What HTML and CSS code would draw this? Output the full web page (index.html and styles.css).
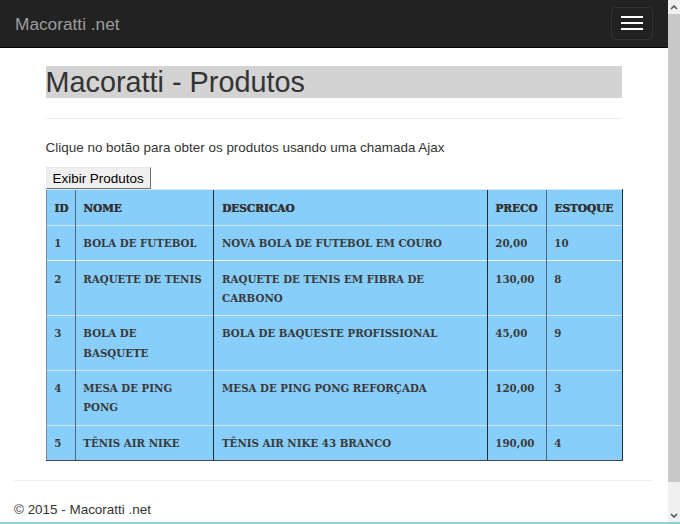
FILE: index.html
```html
<!DOCTYPE html>
<html>
<head>
<meta charset="utf-8">
<title>Macoratti - Produtos</title>
<link rel="stylesheet" href="styles.css">
</head>
<body>
<div class="frame">
    <div class="page">
        <nav class="navbar">
            <a class="brand" href="#">Macoratti .net</a>
            <button class="toggle"><span></span><span></span><span></span></button>
        </nav>
        <div class="content">
            <h1>Macoratti - Produtos</h1>
            <hr class="rule">
            <p>Clique no botão para obter os produtos usando uma chamada Ajax</p>
            <button class="show-btn">Exibir Produtos</button>
            <table class="products">
                <colgroup>
                    <col class="c-id"><col class="c-nome"><col class="c-desc"><col class="c-preco"><col class="c-estoque">
                </colgroup>
                <thead>
                    <tr><th>ID</th><th>NOME</th><th>DESCRICAO</th><th>PRECO</th><th>ESTOQUE</th></tr>
                </thead>
                <tbody>
                    <tr><td>1</td><td>BOLA DE FUTEBOL</td><td>NOVA BOLA DE FUTEBOL EM COURO</td><td>20,00</td><td>10</td></tr>
                    <tr><td>2</td><td>RAQUETE DE TENIS</td><td>RAQUETE DE TENIS EM FIBRA DE CARBONO</td><td>130,00</td><td>8</td></tr>
                    <tr><td>3</td><td>BOLA DE BASQUETE</td><td>BOLA DE BAQUESTE PROFISSIONAL</td><td>45,00</td><td>9</td></tr>
                    <tr><td>4</td><td>MESA DE PING PONG</td><td>MESA DE PING PONG REFORÇADA</td><td>120,00</td><td>3</td></tr>
                    <tr><td>5</td><td>TÊNIS AIR NIKE</td><td>TÊNIS AIR NIKE 43 BRANCO</td><td>190,00</td><td>4</td></tr>
                </tbody>
            </table>
        </div>
        <footer class="footer">
            <hr class="rule">
            <p>© 2015 - Macoratti .net</p>
        </footer>
    </div>
    <div class="scrollbar">
        <div class="arrow">
            <svg width="8" height="5" viewBox="0 0 8 5"><path d="M1 4 L4 1 L7 4" fill="none" stroke="#505050" stroke-width="1.5"/></svg>
        </div>
        <div class="thumb"></div>
        <div class="arrow arrow-down">
            <svg width="8" height="5" viewBox="0 0 8 5"><path d="M1 1 L4 4 L7 1" fill="none" stroke="#505050" stroke-width="1.5"/></svg>
        </div>
    </div>
</div>
<div class="strip"></div>
</body>
</html>
```

FILE: styles.css
```css
html, body {
    margin: 0;
    height: 524px;
    overflow: hidden;
}
body {
    display: flex;
    flex-direction: column;
    color: #333;
    background: #fff;
    font: 13.44px "Liberation Sans", Arial, sans-serif;
    line-height: 19.2px;
}
.frame {
    display: flex;
    flex: 1;
    min-height: 0;
}
.page {
    flex: 1;
    min-width: 0;
    overflow: hidden;
}
.strip {
    height: 2px;
    background: #8fd0d8;
}

/* navbar */
.navbar {
    display: flex;
    justify-content: space-between;
    align-items: flex-start;
    height: 47px;
    padding: 0 15px 0 15px;
    background: #222;
    border-bottom: 1px solid #080808;
}
.brand {
    color: #9d9d9d;
    font-size: 17.28px;
    line-height: 48px;
    text-decoration: none;
}
.toggle {
    display: flex;
    flex-direction: column;
    gap: 4px;
    width: 42px;
    height: 33px;
    margin-top: 7px;
    padding: 8px 9px;
    background: transparent;
    border: 1px solid #333;
    border-radius: 4px;
}
.toggle span {
    display: block;
    width: 22px;
    height: 2px;
    background: #fff;
}

/* main */
.content {
    padding: 18px 46px 0 45.6px;
}
h1 {
    margin: 0;
    height: 32px;
    background: #d3d3d3;
    font-size: 28.8px;
    font-weight: 500;
    line-height: 32px;
}
.rule {
    height: 0;
    margin: 0;
    border: 0;
    border-top: 1px solid #eee;
}
.content .rule {
    margin-top: 20px;
}
.content p {
    margin: 19px 0 0 0;
}
.show-btn {
    display: block;
    width: 105px;
    height: 22px;
    margin-top: 10px;
    padding: 0;
    color: #000;
    background: #efefef;
    border: 1px solid;
    border-color: #e8e8e8 #707070 #707070 #e8e8e8;
    font: 13.44px "Liberation Sans", Arial, sans-serif;
}

/* table */
.products {
    width: 576px;
    table-layout: fixed;
    border-collapse: collapse;
    background: #87cefa;
    font-family: "DejaVu Serif", serif;
    font-stretch: condensed;
    font-size: 11.4px;
    line-height: 19.2px;
}
.c-id { width: 29px; }
.c-nome { width: 138px; }
.c-desc { width: 274px; }
.c-preco { width: 59px; }
.c-estoque { width: 76px; }
.products th, .products td {
    padding: 8.4px 7.68px 6.96px 7.68px;
    vertical-align: top;
    text-align: left;
    border-top: 1px solid #d6e7f2;
    border-left: 1px solid #3a4a55;
    font-weight: bold;
    color: #3a3a3a;
}
.products th {
    font-size: 11.7px;
    color: #333;
    text-shadow: 0.4px 0 0 #333;
}
.products th:nth-child(1), .products td:nth-child(1) {
    border-left-color: #7d8a94;
}
.products th:nth-child(2), .products td:nth-child(2),
.products th:nth-child(5), .products td:nth-child(5) {
    border-left-color: #4f6a7c;
}
.products th:nth-child(3), .products td:nth-child(3) {
    padding-left: 8.4px;
    border-left-color: #1f2c35;
}
.products th:nth-child(4), .products td:nth-child(4) {
    border-left-color: #1f2c35;
}
.products th:last-child, .products td:last-child {
    border-right: 1px solid #1f2c35;
}
.products tbody tr:nth-child(2) td {
    border-top-color: #eef4f8;
}
.products tr:last-child td {
    border-bottom: 1px solid #444;
}

/* footer */
.footer {
    margin: 19px 15px 0 14px;
}
.footer p {
    margin: 19px 0 0 0;
}

/* window scrollbar */
.scrollbar {
    display: flex;
    flex-direction: column;
    width: 12px;
    background: #f0f0f0;
}
.arrow {
    display: flex;
    align-items: center;
    justify-content: center;
    height: 14px;
}
.thumb {
    height: 468px;
    background: #c8c8c8;
}
.arrow-down {
    margin-top: auto;
}
```
